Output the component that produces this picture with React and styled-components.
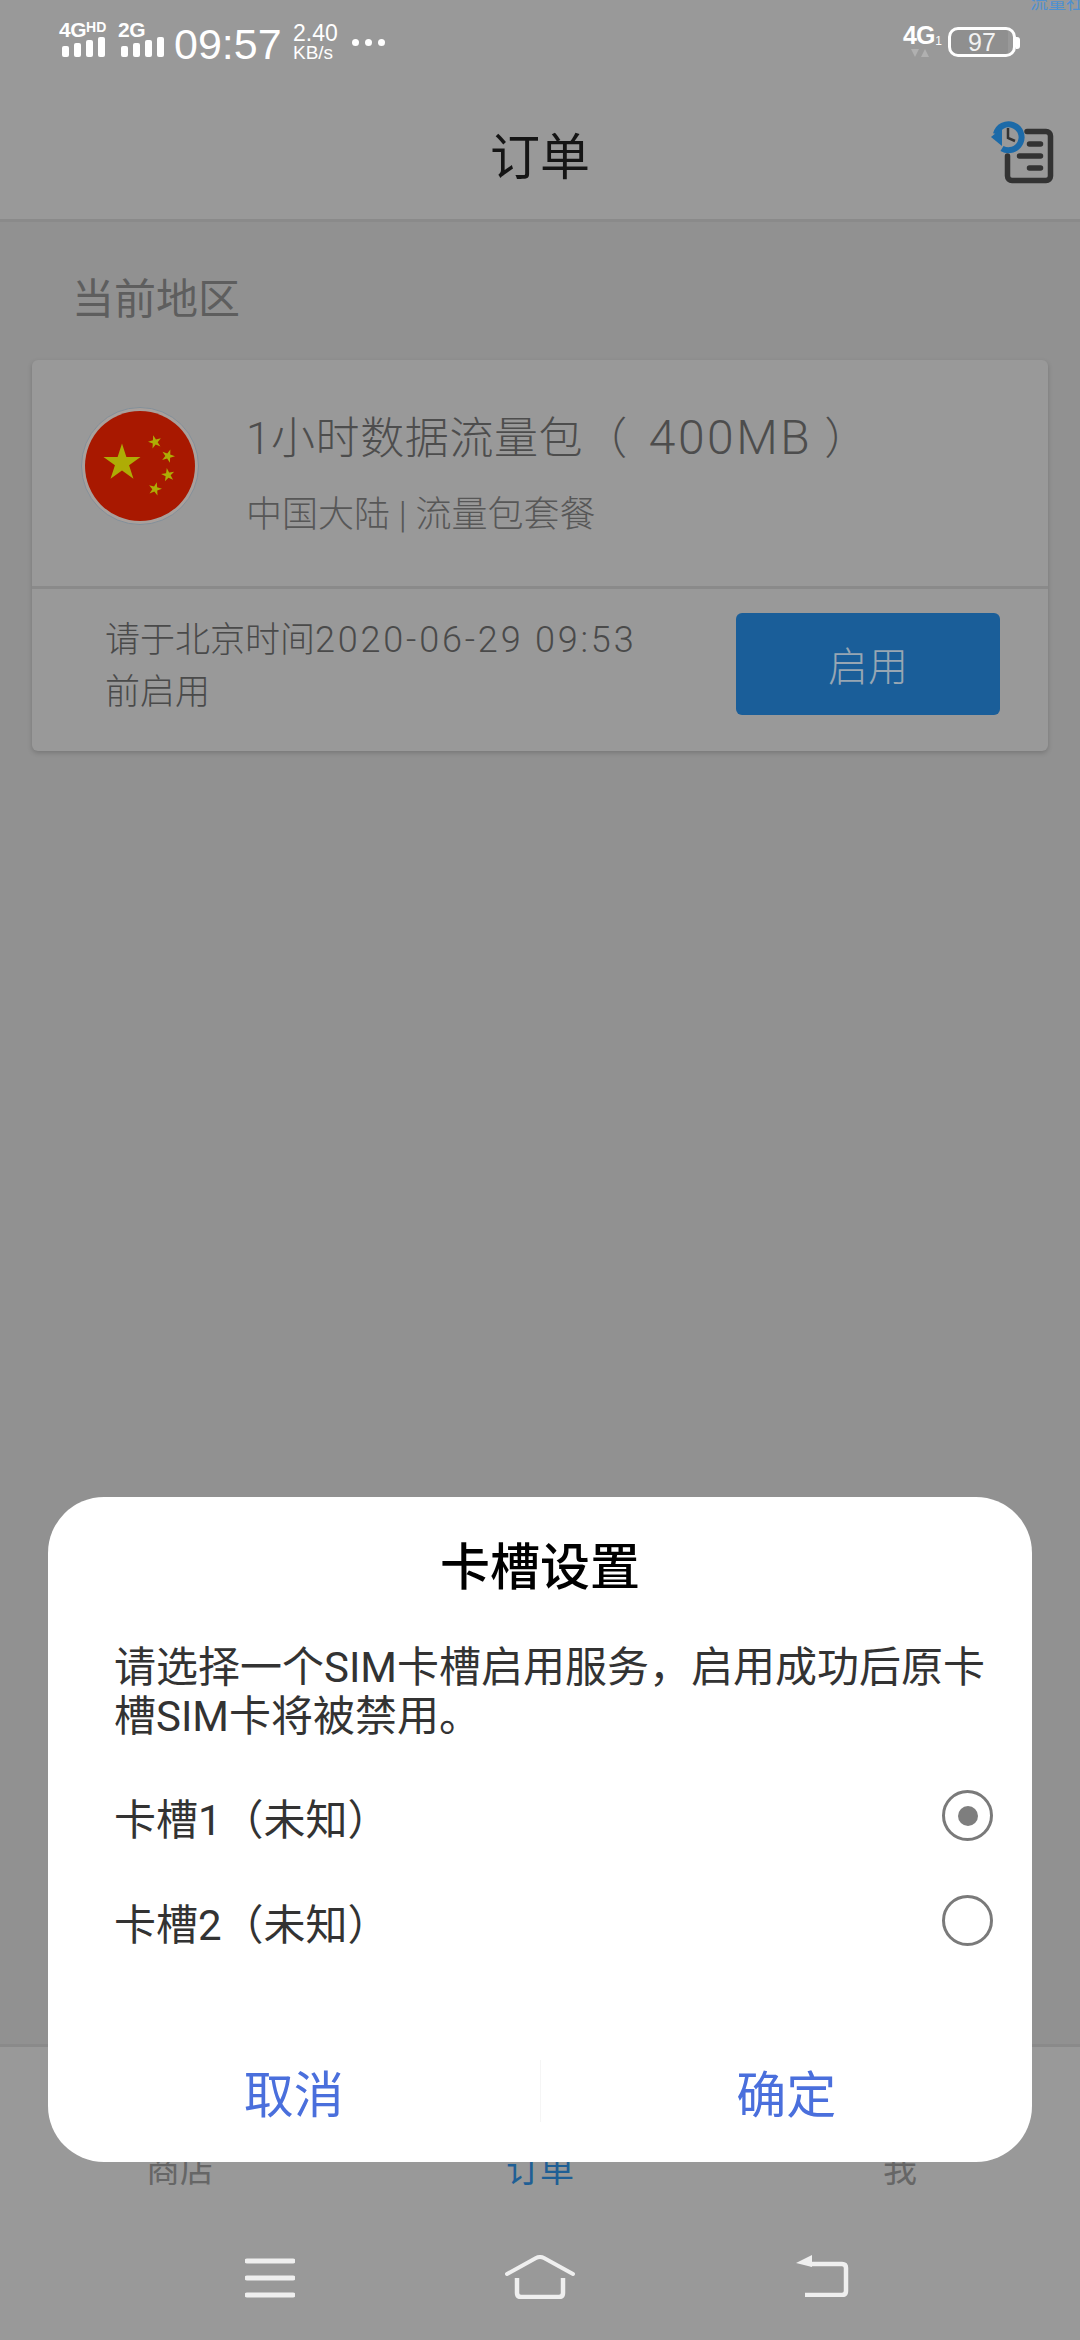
import styled, { createGlobalStyle } from "styled-components";

const GlobalStyle = createGlobalStyle`
  html, body { margin: 0; padding: 0; }
  body { font-family: Roboto, "Noto Sans CJK SC", sans-serif; background: #909090; }
  * { box-sizing: border-box; }
`;

const Screen = styled.div`
  position: relative;
  width: 1080px;
  height: 2340px;
  overflow: hidden;
  display: flex;
  flex-direction: column;
  background: #919191;
`;

const Watermark = styled.div`
  position: absolute;
  top: -8px;
  right: -22px;
  font-size: 18px;
  line-height: 22px;
  color: #4f90d0;
  white-space: nowrap;
`;

const StatusBar = styled.div`
  height: 80px;
  padding: 21px 0 0 59px;
  display: flex;
  align-items: flex-start;
  background: #999;
  color: #fff;
`;

const Signal = styled.div`
  width: ${({ $w }) => $w}px;
  display: flex;
  flex-direction: column;
`;

const SignalLabel = styled.div`
  height: 16px;
  font-family: "Liberation Sans", sans-serif;
  font-size: 21px;
  line-height: 17px;
  font-weight: 700;
  letter-spacing: -0.5px;
  white-space: nowrap;
  sup {
    font-size: 14px;
    line-height: 10px;
    vertical-align: 5px;
    letter-spacing: 0;
  }
`;

const Bars = styled.div`
  margin-left: 3px;
  display: flex;
  align-items: flex-end;
  gap: 5px;
  height: 20px;
`;

const Bar = styled.i`
  display: block;
  width: 7px;
  height: ${({ $h }) => $h}px;
  border-radius: 2px;
  background: #fff;
`;

const Clock = styled.div`
  font-family: "Liberation Sans", sans-serif;
  font-size: 43px;
  line-height: 44px;
  margin-top: 1px;
  margin-left: -1px;
  width: 119px;
`;

const Speed = styled.div`
  font-family: "Liberation Sans", sans-serif;
  width: 59px;
  margin-top: 2px;
  b {
    display: block;
    font-weight: 400;
    font-size: 23px;
    line-height: 21px;
  }
  span {
    display: block;
    font-size: 19px;
    line-height: 17px;
  }
`;

const Dots = styled.div`
  margin-top: 18px;
  display: flex;
  gap: 6px;
`;

const Dot = styled.i`
  display: block;
  width: 7px;
  height: 7px;
  border-radius: 50%;
  background: #fff;
`;

const StatusRight = styled.div`
  margin-left: auto;
  margin-right: 64px;
  display: flex;
  align-items: flex-start;
`;

const Network = styled.div`
  width: 45px;
  margin-top: 1px;
  display: flex;
  flex-direction: column;
  svg {
    display: block;
    margin: 1px 0 0 8px;
  }
`;

const NetworkLabel = styled.div`
  font-family: "Liberation Sans", sans-serif;
  font-size: 25px;
  line-height: 26px;
  font-weight: 700;
  letter-spacing: -1px;
  sub {
    font-size: 12px;
    font-weight: 400;
    line-height: 0;
    vertical-align: -1px;
    margin-left: 1px;
  }
`;

const Battery = styled.div`
  position: relative;
  margin-top: 6px;
  width: 68px;
  height: 30px;
  border: 3px solid #fff;
  border-radius: 10px;
  font-family: "Liberation Sans", sans-serif;
  font-size: 25px;
  line-height: 25px;
  text-align: center;
  color: #f2f2f2;
  background: linear-gradient(90deg, #8f8f8f 92%, transparent 92%);
  &::after {
    content: "";
    position: absolute;
    top: 7px;
    right: -7px;
    width: 4px;
    height: 12px;
    border-radius: 0 3px 3px 0;
    background: #fff;
  }
`;

const Header = styled.div`
  position: relative;
  height: 142px;
  display: flex;
  align-items: center;
  justify-content: center;
  padding-top: 7px;
  background: #999;
  border-bottom: 3px solid #8a8a8a;
`;

const HeaderTitle = styled.div`
  font-size: 50px;
  font-weight: 400;
  color: #151515;
`;

const HistoryButton = styled.div`
  position: absolute;
  left: 990px;
  top: 40px;
  width: 66px;
  height: 64px;
`;

const Content = styled.div`
  flex: 1;
  padding: 0 32px;
  display: flex;
  flex-direction: column;
`;

const RegionLabel = styled.div`
  height: 138px;
  padding: 50px 0 0 40px;
  font-size: 42px;
  line-height: 56px;
  color: #5e5e5e;
`;

const Card = styled.div`
  height: 391px;
  background: #999;
  border-radius: 6px;
  box-shadow: 0 2px 5px rgba(0, 0, 0, 0.18);
  display: flex;
  flex-direction: column;
`;

const PlanRow = styled.div`
  height: 229px;
  padding: 0 0 0 49px;
  display: flex;
  align-items: center;
  gap: 47px;
  border-bottom: 3px solid #8a8a8a;
`;

const FlagWrap = styled.div`
  flex: none;
  width: 118px;
  height: 118px;
  margin-top: -14px;
`;

const PlanText = styled.div`
  display: flex;
  flex-direction: column;
`;

const PlanTitle = styled.div`
  font-size: 44px;
  line-height: 64px;
  color: #4d4d4d;
  font-weight: 300;
  letter-spacing: 0.6px;
  white-space: nowrap;
`;

const PlanAmount = styled.span`
  font-size: 48px;
  letter-spacing: 2.5px;
  margin: 0 12px 0 21px;
`;

const PlanSub = styled.div`
  font-size: 36px;
  line-height: 50px;
  margin-top: 19px;
  color: #575757;
  font-weight: 300;
`;

const ActivateRow = styled.div`
  flex: 1;
  padding: 0 48px 0 73px;
  display: flex;
  align-items: flex-start;
  justify-content: space-between;
`;

const Notice = styled.div`
  width: 556px;
  margin-top: 25px;
  font-size: 35px;
  line-height: 52px;
  color: #4a4a4a;
  font-weight: 300;
  span {
    font-size: 36px;
    letter-spacing: 2.8px;
  }
`;

const ActivateButton = styled.div`
  margin-top: 24px;
  width: 264px;
  height: 102px;
  border-radius: 6px;
  background: #1a5e99;
  display: flex;
  align-items: center;
  justify-content: center;
  font-size: 40px;
  font-weight: 300;
  color: #97a6b3;
`;

const TabBar = styled.div`
  height: 296px;
  background: #999;
  border-top: 3px solid #8a8a8a;
  display: flex;
  flex-direction: column;
`;

const Tabs = styled.div`
  height: 161px;
  padding-top: 100px;
  display: flex;
`;

const Tab = styled.div`
  flex: 1;
  text-align: center;
  font-size: 34px;
  line-height: 46px;
  color: ${({ $active }) => ($active ? "#1f5f95" : "#666")};
`;

const NavBar = styled.div`
  flex: 1;
  display: flex;
  justify-content: center;
  color: #efefef;
`;

const NavSlot = styled.div`
  width: 270px;
  display: flex;
  justify-content: center;
  padding-top: ${({ $top }) => $top}px;
  padding-left: ${({ $shift }) => $shift || 0}px;
  svg { display: block; }
`;

const Dialog = styled.div`
  position: absolute;
  left: 48px;
  top: 1497px;
  width: 984px;
  height: 665px;
  background: #fff;
  border-radius: 56px;
  display: flex;
  flex-direction: column;
`;

const DialogTitle = styled.div`
  margin-top: 37px;
  text-align: center;
  font-size: 50px;
  line-height: 68px;
  font-weight: 500;
  color: #000;
`;

const DialogBody = styled.div`
  margin: 41px 27px 0 66px;
  font-size: 42px;
  line-height: 49px;
  color: #333;
  font-weight: 400;
`;

const Options = styled.div`
  margin-top: 23px;
  padding: 0 39px 0 66px;
  display: flex;
  flex-direction: column;
`;

const Option = styled.div`
  height: 105px;
  display: flex;
  align-items: center;
  justify-content: space-between;
  font-size: 42px;
  color: #333;
`;

const Radio = styled.div`
  width: 51px;
  height: 51px;
  border: 3px solid #7a7a7a;
  border-radius: 50%;
  margin-top: -2px;
  display: flex;
  align-items: center;
  justify-content: center;
  &::after {
    content: "";
    display: ${({ $checked }) => ($checked ? "block" : "none")};
    width: 20px;
    height: 20px;
    border-radius: 50%;
    background: #7e7e7e;
  }
`;

const DialogActions = styled.div`
  margin-top: auto;
  height: 124px;
  margin-bottom: 9px;
  display: flex;
  align-items: center;
`;

const ActionButton = styled.div`
  flex: 1;
  height: 62px;
  display: flex;
  align-items: center;
  justify-content: center;
  font-size: 50px;
  color: #4a6fdc;
  & + & { border-left: 1px solid #f5f5f5; }
`;

const Star = ({ cx, cy, r, rot = 0 }) => {
  const pts = [];
  for (let i = 0; i < 10; i++) {
    const rad = i % 2 ? r * 0.382 : r;
    const a = ((rot + i * 36 - 90) * Math.PI) / 180;
    pts.push(`${(cx + rad * Math.cos(a)).toFixed(2)},${(cy + rad * Math.sin(a)).toFixed(2)}`);
  }
  return <polygon points={pts.join(" ")} fill="#aeac05" />;
};

const ChinaFlag = () => (
  <svg width="118" height="118" viewBox="0 0 118 118">
    <circle cx="59" cy="59" r="58.5" fill="#a8a09c" stroke="#83909a" strokeWidth="1" />
    <circle cx="59" cy="59" r="55" fill="#a81800" />
    <Star cx={41} cy={56} r={19.5} />
    <Star cx={74} cy={35} r={7} rot={-15} />
    <Star cx={87} cy={49} r={7} rot={20} />
    <Star cx={87} cy={68} r={7} rot={-10} />
    <Star cx={74} cy={82} r={7} rot={15} />
  </svg>
);

const HistoryIcon = () => (
  <svg width="66" height="64" viewBox="0 0 66 64">
    <path d="M37 11.5H56a4.5 4.5 0 0 1 4.5 4.5V56a4.5 4.5 0 0 1-4.5 4.5H22a4.5 4.5 0 0 1-4.5-4.5V36" fill="none" stroke="#333" strokeWidth="5.5" strokeLinecap="round" />
    <path d="M39.5 24h11M29.5 36h21M39.5 48h11" stroke="#333" strokeWidth="5.5" strokeLinecap="round" />
    <path d="M6 14A13 13 0 1 1 12 28.5" fill="none" stroke="#1c6aa8" strokeWidth="6" />
    <path d="M1 17 12 8v18z" fill="#1c6aa8" />
    <path d="M18 8v10l7 3" fill="none" stroke="#333" strokeWidth="2.5" />
  </svg>
);

const MenuIcon = () => (
  <svg width="50" height="40" viewBox="0 0 50 40">
    <path d="M2 3h46M2 20h46M2 37h46" stroke="currentColor" strokeWidth="5" strokeLinecap="round" />
  </svg>
);

const HomeIcon = () => (
  <svg width="72" height="44" viewBox="0 0 72 44">
    <path d="M3 19 32 3q4-2 8 0l29 16" fill="none" stroke="currentColor" strokeWidth="4" strokeLinecap="round" />
    <path d="M13 23v15q0 4 4 4h38q4 0 4-4V23" fill="none" stroke="currentColor" strokeWidth="4.5" />
  </svg>
);

const BackIcon = () => (
  <svg width="54" height="42" viewBox="0 0 54 42">
    <path d="M15 9h32q4 0 4 4v23q0 4-4 4H10" fill="none" stroke="currentColor" strokeWidth="4.5" />
    <path d="M1 8 17 0v12z" fill="currentColor" />
  </svg>
);

export default function App() {
  return (
    <Screen>
      <GlobalStyle />
      <Watermark>流量社区</Watermark>
      <StatusBar>
        <Signal $w={59}>
          <SignalLabel>4G<sup>HD</sup></SignalLabel>
          <Bars>
            <Bar $h={11} /><Bar $h={14} /><Bar $h={17} /><Bar $h={20} />
          </Bars>
        </Signal>
        <Signal $w={57}>
          <SignalLabel>2G</SignalLabel>
          <Bars>
            <Bar $h={11} /><Bar $h={14} /><Bar $h={17} /><Bar $h={20} />
          </Bars>
        </Signal>
        <Clock>09:57</Clock>
        <Speed>
          <b>2.40</b>
          <span>KB/s</span>
        </Speed>
        <Dots><Dot /><Dot /><Dot /></Dots>
        <StatusRight>
          <Network>
            <NetworkLabel>4G<sub>1</sub></NetworkLabel>
            <svg width="18" height="9" viewBox="0 0 18 9">
              <path d="M0 0h8L4 8zM10 8h8l-4-8z" fill="#b0b0b0" />
            </svg>
          </Network>
          <Battery>97</Battery>
        </StatusRight>
      </StatusBar>
      <Header>
        <HeaderTitle>订单</HeaderTitle>
        <HistoryButton><HistoryIcon /></HistoryButton>
      </Header>
      <Content>
        <RegionLabel>当前地区</RegionLabel>
        <Card>
          <PlanRow>
            <FlagWrap><ChinaFlag /></FlagWrap>
            <PlanText>
              <PlanTitle>1小时数据流量包（<PlanAmount>400MB</PlanAmount>）</PlanTitle>
              <PlanSub>中国大陆 | 流量包套餐</PlanSub>
            </PlanText>
          </PlanRow>
          <ActivateRow>
            <Notice>请于北京时间<span>2020-06-29 09:53</span>前启用</Notice>
            <ActivateButton>启用</ActivateButton>
          </ActivateRow>
        </Card>
      </Content>
      <TabBar>
        <Tabs>
          <Tab>商店</Tab>
          <Tab $active>订单</Tab>
          <Tab>我</Tab>
        </Tabs>
        <NavBar>
          <NavSlot $top={50}><MenuIcon /></NavSlot>
          <NavSlot $top={47}><HomeIcon /></NavSlot>
          <NavSlot $top={47} $shift={24}><BackIcon /></NavSlot>
        </NavBar>
      </TabBar>
      <Dialog>
        <DialogTitle>卡槽设置</DialogTitle>
        <DialogBody>请选择一个SIM卡槽启用服务，启用成功后原卡槽SIM卡将被禁用。</DialogBody>
        <Options>
          <Option>卡槽1（未知）<Radio $checked /></Option>
          <Option>卡槽2（未知）<Radio /></Option>
        </Options>
        <DialogActions>
          <ActionButton>取消</ActionButton>
          <ActionButton>确定</ActionButton>
        </DialogActions>
      </Dialog>
    </Screen>
  );
}
